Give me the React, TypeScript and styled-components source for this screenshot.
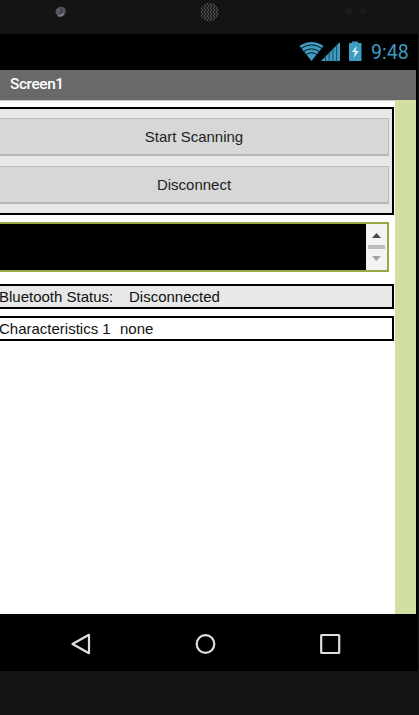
import React from "react";
import styled, { createGlobalStyle } from "styled-components";

const GlobalStyle = createGlobalStyle`
  *, *::before, *::after { box-sizing: border-box; }
  body { margin: 0; background: #141414; overflow: hidden; }
`;

const Phone = styled.div`
  width: 419px;
  height: 715px;
  display: flex;
  flex-direction: column;
  overflow: hidden;
  background: #141414;
  font-family: "Liberation Sans", Arial, sans-serif;
`;

const Bezel = styled.div<{ $height: number }>`
  flex: 0 0 ${(p) => p.$height}px;
  svg { display: block; }
`;

const Display = styled.div`
  width: 418px;
  height: 637px;
  display: flex;
  flex-direction: column;
  background: #000;
`;

const StatusBar = styled.div`
  height: 36px;
  flex: none;
  display: flex;
  justify-content: flex-end;
  padding-right: 9px;
  color: #3e9cc1;
`;

const Clock = styled.time`
  width: 39px;
  padding-left: 1px;
  font: 19.5px/38px Roboto, sans-serif;
  white-space: nowrap;
`;

const TitleBar = styled.h1`
  width: 416px;
  height: 30px;
  flex: none;
  margin: 0;
  padding-left: 10px;
  background: #696969;
  color: #fff;
  font: 500 15.4px/29px Roboto, sans-serif;
  letter-spacing: -0.4px;
`;

const Body = styled.div`
  width: 416px;
  height: 514px;
  flex: none;
  display: flex;
  background: #d1dfa2;
`;

const Form = styled.main`
  width: 395px;
  height: 100%;
  padding-right: 1px;
  border-top: 1px solid #cdcdcd;
  background: #fff;
`;

const Panel = styled.section`
  height: 108px;
  margin-top: 6px;
  padding: 9px 3px 0 0;
  display: flex;
  flex-direction: column;
  gap: 10px;
  border: 2px solid #000;
  border-left: 0;
  background: #e8e8e8;
`;

const Button = styled.button`
  width: 100%;
  height: 38px;
  margin: 0;
  padding: 0;
  border: 1px solid #bdbdbd;
  border-bottom: 2px solid #b6b6b6;
  border-left: 0;
  border-radius: 0;
  background: #d7d7d7;
  color: #222;
  font: 15px/35px "Liberation Sans", Arial, sans-serif;
`;

const ListBox = styled.div`
  width: 389px;
  height: 50px;
  margin-top: 7px;
  display: flex;
  justify-content: flex-end;
  border: 2px solid #95aa43;
  border-left: 0;
  background: #000;
`;

const ScrollBar = styled.div`
  width: 21px;
  height: 46px;
  background: #f3f3f3;
  svg { display: block; }
`;

const Row = styled.div<{ $top: number; $fill: string; $labelWidth: number }>`
  height: 25px;
  margin-top: ${(p) => p.$top}px;
  display: grid;
  grid-template-columns: ${(p) => p.$labelWidth}px 1fr;
  border: 2px solid #000;
  border-left: 0;
  background: ${(p) => p.$fill};
  color: #111;
  font-size: 15px;
  line-height: 22px;
  white-space: nowrap;
  span:first-child { margin-left: -1px; }
`;

const NavBar = styled.nav`
  height: 57px;
  flex: none;
  padding: 18px 76px 0 69px;
  display: flex;
  justify-content: space-between;
`;

const NavIcon = styled.svg`
  width: 24px;
  height: 24px;
  fill: none;
  stroke: #dedede;
  stroke-width: 2.2;
  stroke-linejoin: round;
`;

function BezelDetails() {
  return (
    <svg width="419" height="34" viewBox="0 0 419 34">
      <defs>
        <radialGradient id="lens" cx="45%" cy="35%">
          <stop offset="0" stopColor="#25252c" />
          <stop offset=".5" stopColor="#55555e" />
          <stop offset=".8" stopColor="#56565d" />
          <stop offset="1" stopColor="#1b1b1d" />
        </radialGradient>
        <pattern id="mesh" width="3" height="4" patternUnits="userSpaceOnUse">
          <path d="M0 0L2 2L0 4" fill="none" stroke="#545454" strokeWidth=".9" />
        </pattern>
      </defs>
      <circle cx="61" cy="12.5" r="5.8" fill="url(#lens)" />
      <circle cx="59.5" cy="10.5" r="1" fill="#85858d" />
      <path d="M58 15.5Q61.5 17 64 13.5" fill="none" stroke="#85858f" strokeWidth="1.4" />
      <circle cx="209.5" cy="12" r="9.5" fill="#202020" />
      <circle cx="209.5" cy="12" r="9.3" fill="url(#mesh)" />
      <circle cx="349" cy="11" r="3" fill="#1d1d1d" />
      <circle cx="363" cy="11" r="2.5" fill="#1c1c1c" />
    </svg>
  );
}

function StatusIcons() {
  return (
    <svg width="71" height="36" viewBox="0 0 71 36" fill="#3e9cc1">
      <path d="M.5 12Q12.5 4 24.5 12L12.5 27Z" />
      <g fill="none" stroke="#06131a" strokeWidth="1">
        <path d="M2 14.5Q12.5 7.2 23 14.5M4.3 17.7Q12.5 12 20.7 17.7M6.8 20.8Q12.5 16.7 18.2 20.8" />
      </g>
      <path d="M41 8V27H22Z" />
      <path d="M26.5 21V28M30.2 17V28M33.9 13V28M37.6 10V28" stroke="#10394b" strokeWidth=".8" />
      <path d="M50 9H53V7.5H59V9H62.5V27H50Z" />
      <path d="M57.5 12L53 18H56L54.5 24L60 17H56.8Z" fill="#d5f3fa" />
    </svg>
  );
}

export default function App() {
  return (
    <>
      <GlobalStyle />
      <Phone>
        <Bezel $height={34}><BezelDetails /></Bezel>
        <Display>
          <StatusBar><StatusIcons /><Clock>9:48</Clock></StatusBar>
          <TitleBar>Screen1</TitleBar>
          <Body>
            <Form>
              <Panel>
                <Button>Start Scanning</Button>
                <Button>Disconnect</Button>
              </Panel>
              <ListBox>
                <ScrollBar>
                  <svg width="21" height="46" viewBox="0 0 21 46">
                    <path d="M6 14L10.5 9L15 14Z" fill="#484848" />
                    <path d="M2 21H19V25H2Z" fill="#bebebe" />
                    <path d="M6 32L10.5 37L15 32Z" fill="#a2a2a2" />
                  </svg>
                </ScrollBar>
              </ListBox>
              <Row $top={12} $fill="#e8e8e8" $labelWidth={129}>
                <span>Bluetooth Status:</span><span>Disconnected</span>
              </Row>
              <Row $top={7} $fill="#fff" $labelWidth={120}>
                <span>Characteristics 1</span><span>none</span>
              </Row>
            </Form>
          </Body>
          <NavBar>
            <NavIcon viewBox="0 0 24 24"><path d="M3.5 12L20 2.8V21.2Z" /></NavIcon>
            <NavIcon viewBox="0 0 24 24"><circle cx="11.5" cy="12" r="8.8" /></NavIcon>
            <NavIcon viewBox="0 0 24 24"><rect x="3.2" y="3" width="18" height="18" rx=".5" /></NavIcon>
          </NavBar>
        </Display>
        <Bezel $height={44} />
      </Phone>
    </>
  );
}
